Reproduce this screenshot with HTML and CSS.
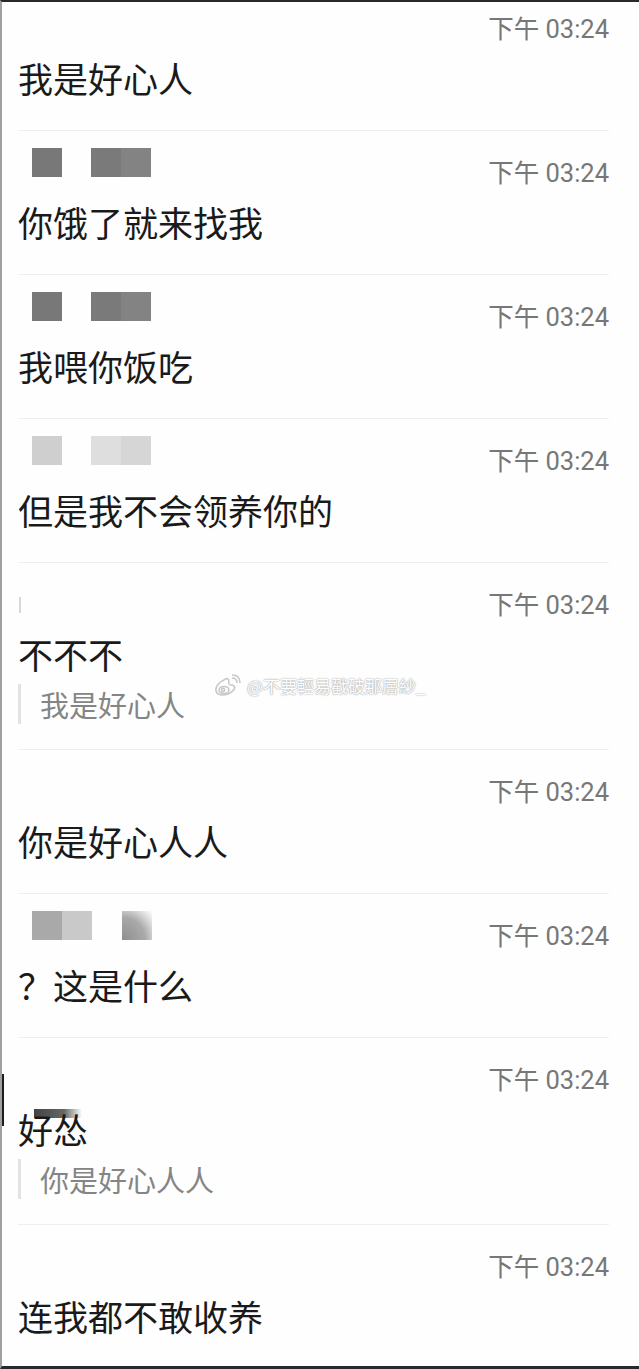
FILE: index.html
```html
<!DOCTYPE html>
<html lang="zh-CN">
<head>
<meta charset="UTF-8">
<meta name="viewport" content="width=device-width, initial-scale=1.0">
<title>聊天记录</title>
<link rel="stylesheet" href="styles.css">
</head>
<body>

<div class="screen">
  <div class="msg first">
    <div class="head">
      <div class="names"></div>
      <span class="time">下午 03:24</span>
    </div>
    <div class="text">我是好心人</div>
  </div>

  <div class="msg">
    <div class="head">
      <div class="names"><i class="px dark"></i><i class="px dark wide"></i></div>
      <span class="time">下午 03:24</span>
    </div>
    <div class="text">你饿了就来找我</div>
  </div>

  <div class="msg">
    <div class="head">
      <div class="names"><i class="px dark"></i><i class="px dark wide"></i></div>
      <span class="time">下午 03:24</span>
    </div>
    <div class="text">我喂你饭吃</div>
  </div>

  <div class="msg">
    <div class="head">
      <div class="names"><i class="px light"></i><i class="px light wide"></i></div>
      <span class="time">下午 03:24</span>
    </div>
    <div class="text">但是我不会领养你的</div>
  </div>

  <div class="msg">
    <div class="head">
      <div class="names"><i class="tick"></i></div>
      <span class="time">下午 03:24</span>
    </div>
    <div class="text">不不不</div>
    <div class="quote">我是好心人</div>
  </div>

  <div class="msg">
    <div class="head">
      <div class="names"></div>
      <span class="time">下午 03:24</span>
    </div>
    <div class="text">你是好心人人</div>
  </div>

  <div class="msg">
    <div class="head">
      <div class="names"><i class="px mid duo"></i><i class="px fade"></i></div>
      <span class="time">下午 03:24</span>
    </div>
    <div class="text">？这是什么</div>
  </div>

  <div class="msg">
    <div class="head">
      <div class="names"></div>
      <span class="time">下午 03:24</span>
    </div>
    <div class="text smudge">好怂</div>
    <div class="quote">你是好心人人</div>
  </div>

  <div class="msg last">
    <div class="head">
      <div class="names"></div>
      <span class="time">下午 03:24</span>
    </div>
    <div class="text">连我都不敢收养</div>
  </div>

  <!-- repost watermark -->
  <div class="mark">
    <svg width="28" height="24" viewBox="0 0 28 24">
      <g fill="none" stroke="#c8c8c8" stroke-width="1.6">
        <path d="M11 6c-5 2-9 7-8 11s7 5 12 3 8-6 6-8-4 0-5-2 1-4-1-5-3 0-4 1z"/>
        <ellipse cx="11" cy="16" rx="5" ry="3.5"/>
        <circle cx="10" cy="16" r="1.6"/>
        <path d="M19 4c3 0 5 2 5 5"/>
        <path d="M19 1c5 0 8 3 8 8"/>
      </g>
    </svg>
    <span>@不要輕易戳破那層紗_</span>
  </div>
  <i class="edge"></i>
</div>

</body>
</html>
```

FILE: styles.css
```css
body {
  margin: 0;
  padding: 0;
  background-color: #fff;
  font-family: Roboto, "Noto Sans CJK SC", sans-serif;
}
.screen {
  position: relative;
  height: 1369px;
  box-sizing: border-box;
  border-top: 2px solid #2a2a2a;
  border-left: 2px solid #a0a0a0;
  border-bottom: 3px solid #2a2a2a;
  background-color: #fefefe;
  overflow: hidden;
}
.msg {
  margin: 0 30px 0 16px;
  padding-bottom: 25px;
  border-bottom: 1px solid #efefef;
}
.msg.last {
  border-bottom: none;
}
.head {
  display: flex;
  justify-content: space-between;
  align-items: flex-start;
}
.names {
  display: flex;
  margin-top: 17px;
  padding-left: 14px;
  height: 29px;
}
.time {
  margin-top: 27px;
  font-size: 25.5px;
  line-height: 30px;
  color: #777;
}
.first .names {
  margin-top: 0;
  height: 0;
}
.first .time {
  margin-top: 12px;
}
.text {
  margin-top: 14px;
  margin-bottom: 7px;
  font-family: "Noto Sans CJK SC", sans-serif;
  font-size: 35px;
  line-height: 40px;
  color: #1a1a1a;
}
.quote {
  margin-top: 10px;
  padding-left: 19px;
  border-left: 3px solid #e2e2e2;
  font-family: "Noto Sans CJK SC", sans-serif;
  font-size: 29px;
  line-height: 40px;
  color: #858585;
}

/* mosaic over the sender names */
.px {
  display: block;
  width: 30px;
  height: 29px;
}
.px.wide {
  width: 60px;
  margin-left: 29px;
}
.px.dark {
  background-color: #787878;
}
.px.dark.wide {
  background: linear-gradient(90deg, #7a7a7a 50%, #838383 50%);
}
.px.light {
  background-color: #cfcfcf;
}
.px.light.wide {
  background: linear-gradient(90deg, #dedede 50%, #d6d6d6 50%);
}
.px.duo {
  width: 60px;
  background: linear-gradient(90deg, #a9a9a9 50%, #c9c9c9 50%);
}
.px.fade {
  margin-left: 30px;
  background: radial-gradient(circle at 0% 100%, #8e8e8e 0, #a9a9a9 55%, rgba(170,170,170,0.3) 85%, rgba(255,255,255,0) 100%);
}
.tick {
  display: block;
  width: 2px;
  height: 16px;
  margin: 17px 0 0 -13px;
  background-color: #d8d8d8;
}
.smudge {
  background: linear-gradient(90deg, #444 0, #666 30px, rgba(255,255,255,0) 48px) no-repeat 16px 0 / 48px 9px;
}

.mark {
  position: absolute;
  left: 211px;
  top: 671px;
  display: flex;
  align-items: center;
  gap: 6px;
}
.mark span {
  font-family: "Noto Sans CJK TC", sans-serif;
  font-size: 17px;
  color: #fff;
  text-shadow: 0 0 2px #aaa, 0 0 1px #999;
}
.edge {
  position: absolute;
  left: -2px;
  top: 1072px;
  width: 4px;
  height: 52px;
  background-color: #1c1c1c;
}
```
